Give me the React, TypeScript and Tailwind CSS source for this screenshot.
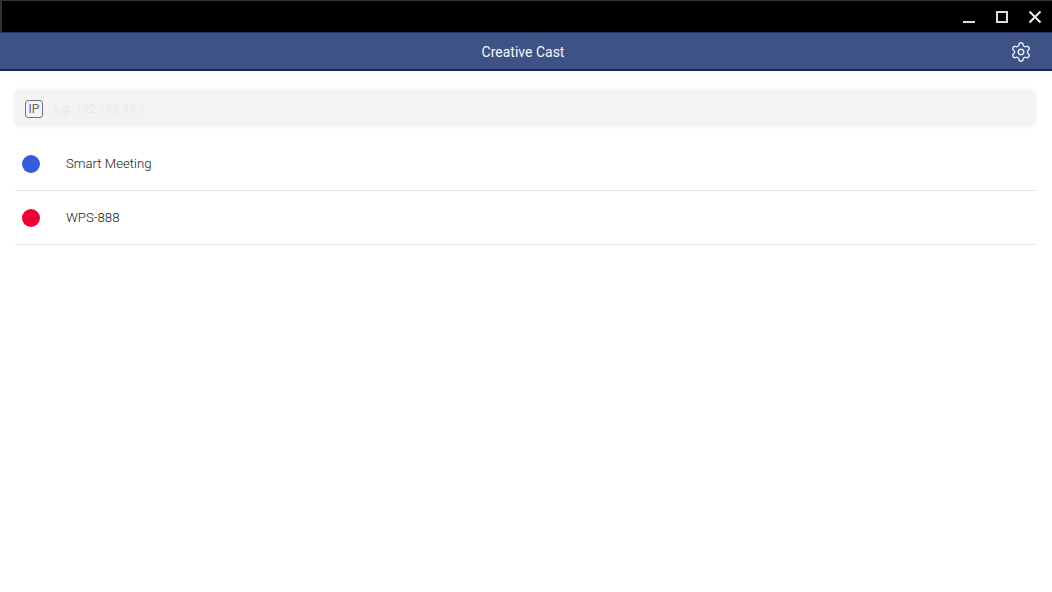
import React from 'react';
import { Settings } from 'lucide-react';

const devices = [
  { name: 'Smart Meeting', color: 'bg-[#3a5bdc]' },
  { name: 'WPS-888', color: 'bg-[#ee0033]' },
];

const App: React.FC = () => {
  return (
    <div className="w-[1052px] h-[592px] flex flex-col bg-white overflow-hidden font-['Roboto',sans-serif]">
      {/* window title bar */}
      <div className="h-8 shrink-0 bg-black border-t border-l-2 border-[#333333] flex items-center justify-end">
        <div className="flex items-center h-8 pr-[10px]">
          <div className="w-3 h-3 flex items-end mt-[1px]">
            <div className="w-3 h-[2px] bg-[#dddddd]"></div>
          </div>
          <div className="w-[12px] h-[12px] ml-[21px] border-2 border-[#dddddd]"></div>
          <svg width="14" height="14" viewBox="0 0 14 14" className="ml-[20px] text-[#eeeeee]">
            <path d="M1.5 1.5L12.5 12.5M12.5 1.5L1.5 12.5" stroke="currentColor" strokeWidth="2" fill="none" />
          </svg>
        </div>
      </div>

      {/* app bar */}
      <div className="h-[39px] shrink-0 bg-[#3e5285] border-t border-[#1f3468] border-b-2 border-b-[#11295f] flex items-center pl-[36px] pr-[20px]">
        <div className="flex-1 text-center text-[14px] text-[#f4f7fd] pt-[2px]">Creative Cast</div>
        <Settings size={22} strokeWidth={1.6} className="text-[#dfe8fa] mt-[1px]" />
      </div>

      {/* content */}
      <div className="flex-1 pl-[15px] pt-[18px]">
        <div className="h-[38px] w-[1021px] rounded-[6px] bg-[#f3f3f3] flex items-center pl-[10px] pt-[1px] shadow-[0_0_4px_rgba(0,0,0,0.05)]">
          <div className="w-[18px] h-[18px] rounded-[3px] border border-[#777777] flex items-center justify-center text-[12px] leading-none text-[#666666]">IP</div>
          <span className="ml-[10px] text-[12px] text-[#e9e9e9]">e.g. 192.168.43.1</span>
        </div>

        <div className="w-[1021px] mt-[10px]">
          {devices.map((device) => (
            <div key={device.name} className="h-[54px] flex items-center border-b border-[#e9e9e9]">
              <div className={`w-[18px] h-[18px] ml-[6.5px] rounded-full ${device.color}`}></div>
              <span className="ml-[26.5px] text-[13.2px] font-light text-[#222222]">{device.name}</span>
            </div>
          ))}
        </div>
      </div>
    </div>
  );
};

export default App;
